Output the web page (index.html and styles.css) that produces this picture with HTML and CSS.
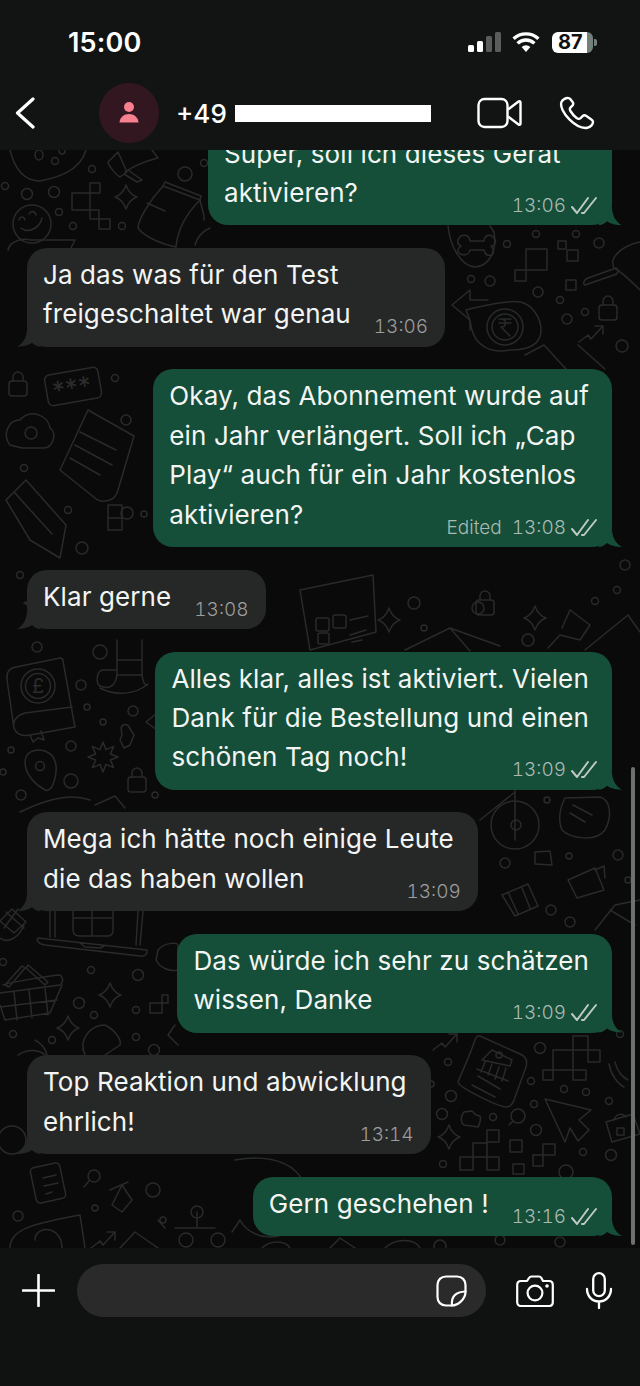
FILE: index.html
```html
<!DOCTYPE html>
<html lang="en">
<head>
  <meta charset="UTF-8">
  <title>Chat</title>
  <link rel="stylesheet" href="styles.css">
</head>
<body>
  <header class="top">
    <div class="status">
      <span class="clock">15:00</span>
      <div class="status-icons">
        <svg class="signal" width="33" height="20" viewBox="0 0 33 20">
          <rect x="0" y="13" width="6" height="7" rx="1.5" fill="#fff"/>
          <rect x="9" y="9" width="6" height="11" rx="1.5" fill="#fff"/>
          <rect x="18" y="4" width="6" height="16" rx="1.5" fill="#5a5c5b"/>
          <rect x="27" y="0" width="6" height="20" rx="1.5" fill="#5a5c5b"/>
        </svg>
        <svg class="wifi" width="28" height="20" viewBox="0 0 28 20">
          <path d="M14 20 L9.6 15 A6.5 6.5 0 0 1 18.4 15 Z" fill="#fff"/>
          <path d="M5.6 11.4 A12 12 0 0 1 22.4 11.4" fill="none" stroke="#fff" stroke-width="3.4"/>
          <path d="M1.6 6.8 A18 18 0 0 1 26.4 6.8" fill="none" stroke="#fff" stroke-width="3.4"/>
        </svg>
        <div class="battery">87</div>
      </div>
    </div>
    <nav class="contact">
      <svg class="back" width="20" height="32" viewBox="0 0 20 32">
        <path d="M18 2 L2.5 16 L18 30" fill="none" stroke="#fff" stroke-width="3.2" stroke-linecap="round" stroke-linejoin="round"/>
      </svg>
      <div class="avatar">
        <svg width="22" height="24" viewBox="0 0 22 24">
          <circle cx="11" cy="6" r="5" fill="#f67f90"/>
          <path d="M1.5 21.5 C2 16 6 13 11 13 C16 13 20 16 20.5 21.5 Z" fill="#f67f90"/>
        </svg>
      </div>
      <div class="name">+49 <span class="redacted"></span></div>
      <svg class="video" width="45" height="32" viewBox="0 0 45 32">
        <rect x="1.5" y="2" width="29" height="28" rx="6" fill="none" stroke="#fff" stroke-width="2.4"/>
        <path d="M31 12.5 L41.5 4.5 C42.6 3.8 43.5 4.4 43.5 5.6 V26.4 C43.5 27.6 42.6 28.2 41.5 27.5 L31 19.5" fill="none" stroke="#fff" stroke-width="2.4" stroke-linejoin="round"/>
      </svg>
      <svg class="phone" width="36" height="34" viewBox="0 0 36 34">
        <path d="M9.5 2.2 C7.4 1.4 3.4 3.4 2.4 6.2 C1 10.4 4.6 17.6 10.4 23.4 C16.2 29.2 23.4 32.6 28.4 31.8 C31.8 31.2 34.2 28 34 25.8 C33.9 24.6 33 24 32 23.2 L27 19.8 C25.8 19 24.6 19.2 23.6 20.2 L21.6 22.2 C20.4 23.2 19 23 17.6 22 C15.2 20.2 13 17.6 11.4 15 C10.6 13.6 10.6 12.4 11.6 11.4 L13.4 9.6 C14.4 8.6 14.4 7.4 13.8 6.2 L11.4 3.2 C10.8 2.6 10.2 2.4 9.5 2.2 Z" fill="none" stroke="#fff" stroke-width="2.4" stroke-linejoin="round"/>
      </svg>
    </nav>
  </header>

  <main class="chat">
    <svg class="doodles" width="640" height="1098" viewBox="0 150 640 1098">
      <defs>
        <g id="lock"><rect x="-9" y="-5" width="18" height="15" rx="3"/><path d="M-5 -5 V-9 A5 5 0 0 1 5 -9 V-5"/></g>
        <g id="spark"><path d="M0 -12 C2 -6 5 -2 11 0 C5 2 2 6 0 12 C-2 6 -5 2 -11 0 C-5 -2 -2 -6 0 -12 Z"/></g>
        <g id="trend"><path d="M-12 8 L-3 1 L0 5 L11 -7 M4 -8 H12 V0"/></g>
      </defs>
      <!-- top left -->
      <path d="M10 150 C15 170 25 181 40 181 C55 178 80 172 86 150"/>
      <ellipse cx="39" cy="155" rx="4" ry="5"/><circle cx="55" cy="161" r="3.5"/><circle cx="62" cy="151" r="3"/>
      <path d="M118 152 L108 162 C108 165 116 175 120 177 L127 172 L118 152 M125 172 C135 165 150 160 158 158 L152 150 M128 170 L142 180 L137 182 L124 174"/>
      <circle cx="92" cy="169" r="3.5"/><circle cx="5" cy="186" r="3.5"/><circle cx="27" cy="194" r="5.5"/><circle cx="54" cy="192" r="5.5"/>
      <circle cx="59" cy="212" r="3.5"/><circle cx="73" cy="226" r="3.5"/><circle cx="122" cy="226" r="3.5"/><circle cx="185" cy="174" r="7"/><circle cx="204" cy="163" r="3.5"/>
      <path d="M72 193 H90 V210 H72 Z M90 183 H100 V193 H90 Z M90 210 H99 V219 H90 Z M99 219 H110 V229 H99 Z"/>
      <use href="#spark" x="126" y="197"/>
      <path d="M165 182 L201 196 L200 200 L163 186 Z M163 186 C150 200 138 220 138 228 C145 238 165 245 176 247 C178 225 190 210 200 200 C202 210 205 215 204 220 M147 203 L165 211"/>
      <circle cx="32" cy="224" r="19"/>
      <path d="M19 220 C20 216 24 216 25 220 M29 214 C31 210 35 211 36 215 M21 228 C28 234 40 228 42 218"/>
      <path d="M8 250 C10 240 25 238 30 240 L75 240 L70 250 M195 245 C198 235 205 230 210 228"/>
      <!-- bone blob and rupee -->
      <path d="M448 226 C450 245 460 266 475 267 C490 266 497 250 494 232 L490 226"/>
      <path d="M458 240 C461 233 469 234 470 241 H484 C485 234 492 233 495 240 C497 243 493 246 491 246 C493 248 495 252 492 255 C488 256 485 255 484 250 H470 C469 256 461 256 458 252 C457 248 460 247 461 246 C459 245 457 243 458 240 Z"/>
      <circle cx="507" cy="244" r="3.5"/><circle cx="536" cy="234" r="3.5"/><circle cx="599" cy="243" r="5"/><circle cx="576" cy="234" r="3.5"/>
      <path d="M526 249 H547 V270 H526 Z M515 270 H526 V281 H515 Z M558 241 H566 V249 H558 Z M567 250 H578 V261 H567 Z M566 280 H576 V290 H566 Z"/>
      <circle cx="471" cy="279" r="3.5"/><circle cx="490" cy="281" r="5"/><circle cx="538" cy="292" r="5"/><circle cx="560" cy="300" r="3.5"/><circle cx="585" cy="312" r="3.5"/><circle cx="567" cy="319" r="5"/>
      <path d="M466 310 C480 306 510 300 520 302 C532 304 541 318 541 330 C541 345 528 350 510 350 C490 354 476 345 472 330 C470 320 470 318 466 310"/>
      <circle cx="505" cy="327" r="18"/><circle cx="505" cy="327" r="13"/>
      <path d="M499 319 H511 M499 323 H511 M501 319 C507 319 507 327 501 327 L510 336"/>
      <use href="#lock" x="608" y="310"/>
      <use href="#trend" x="591" y="334"/>
      <circle cx="622" cy="346" r="6"/>
      <path d="M585 285 L614 275 C618 274 620 270 616 268 L588 278 C583 280 583 285 585 285 M640 242 C625 245 608 256 614 268 C622 272 630 280 640 290"/>
      <path d="M452 305 L470 290 V300 H488 M452 305 L470 320 V330"/>
      <path d="M525 355 L544 345 L566 369 M578 345 L605 369"/>
      <!-- left of third bubble -->
      <use href="#lock" x="18" y="386"/>
      <rect x="46" y="371" width="54" height="31" rx="5" transform="rotate(-10 73 386)"/>
      <text class="stars" x="52" y="397" transform="rotate(-10 73 386)">***</text>
      <circle cx="115" cy="378" r="3.5"/><circle cx="126" cy="420" r="5"/>
      <path d="M10 445 C2 435 8 420 20 420 C30 408 48 415 50 428 C58 434 52 448 44 448 H22 Z"/><circle cx="31" cy="433" r="6"/>
      <path d="M88 410 L134 436 L118 490 C115 503 100 503 95 498 L60 470 Z M80 432 L116 450 M75 445 L112 465 M70 458 L100 475"/>
      <path d="M6 500 L26 480 L66 525 L60 558 L30 540 Z M14 492 L52 534 M26 480 L12 494"/>
      <circle cx="24" cy="468" r="3.5"/><circle cx="68" cy="510" r="3.5"/><circle cx="82" cy="548" r="6"/><circle cx="127" cy="513" r="6"/><circle cx="144" cy="514" r="3"/>
      <path d="M108 505 H122 V518 H108 Z M108 518 H122 V530 H108 Z"/>
      <use href="#spark" x="35" y="603"/>
      <circle cx="20" cy="575" r="3.5"/>
      <!-- qr card, pin, gift -->
      <path d="M300 590 L373 575 L376 632 L310 650 Z"/>
      <rect x="316" y="618" width="13" height="13" rx="2"/><rect x="333" y="615" width="13" height="13" rx="2"/><rect x="318" y="633" width="11" height="11" rx="2"/>
      <path d="M350 620 L368 616 M350 635 L366 630 M352 642 L362 640"/>
      <use href="#spark" x="389" y="620"/>
      <circle cx="414" cy="603" r="6"/><circle cx="424" cy="628" r="3"/><circle cx="478" cy="608" r="6"/><use href="#lock" x="485" y="605"/>
      <use href="#spark" x="535" y="618"/>
      <path d="M405 650 L450 628 L500 646 M450 628 L470 651"/>
      <path d="M570 610 L590 625 L580 640 L560 635 L548 648 M570 610 L562 628"/>
      <path d="M585 650 L628 615 L640 632"/>
      <circle cx="528" cy="640" r="6"/><circle cx="595" cy="601" r="3.5"/><circle cx="625" cy="565" r="5"/><circle cx="617" cy="590" r="3.5"/>
      <use href="#trend" x="310" y="670"/>
      <!-- book and scroll -->
      <path d="M7 680 C6 672 10 668 16 667 L60 658 C62 658 63 659 63 661 L74 722 L75 727 L30 735 C20 737 16 733 14 728 C12 720 18 715 25 713 L72 707 M14 728 L7 680 M30 735 L33 742 L38 738 L44 740 L41 731"/>
      <circle cx="38" cy="686" r="17"/><circle cx="38" cy="686" r="12.5"/>
      <text class="pound" x="32" y="693">£</text>
      <path d="M117 640 V672 C117 685 110 690 100 686 C96 684 96 672 102 670 H117 M117 660 H142 M117 675 H142 M142 640 V672 C142 682 146 688 148 684 M100 688 C115 696 135 695 148 684"/>
      <circle cx="100" cy="652" r="7"/><circle cx="37" cy="647" r="5"/><circle cx="81" cy="685" r="5"/><circle cx="87" cy="707" r="3"/>
      <circle cx="133" cy="711" r="5"/><circle cx="103" cy="722" r="3"/><circle cx="11" cy="750" r="3"/><circle cx="71" cy="746" r="5"/><circle cx="3" cy="772" r="3"/><circle cx="71" cy="781" r="7"/><circle cx="21" cy="795" r="5"/><circle cx="155" cy="795" r="3"/>
      <path d="M25 762 C25 752 35 748 45 751 C55 755 58 765 55 778 C53 786 50 792 45 790 C36 785 25 775 25 762 Z"/><circle cx="40" cy="766" r="4.5"/>
      <polygon points="103,742 106,749.6 113.6,746.4 110.4,754 118,757 110.4,760 113.6,767.6 106,764.4 103,772 100,764.4 92.4,767.6 95.6,760 88,757 95.6,754 92.4,746.4 100,749.6"/>
      <use href="#lock" x="137" y="782"/>
      <path d="M121 728 C123 723 128 724 129 727 L134 735 L130 745 L124 748 L120 740 L122 735 Z"/>
      <path d="M157 713 L146 722 L157 730"/>
      <path d="M20 812 C55 795 75 795 90 800 M95 805 L115 796 L125 808"/>
      <!-- right of bubble 6 -->
      <path d="M515 790 V840 M480 820 L515 792"/>
      <circle cx="515" cy="825" r="24"/><circle cx="516" cy="825" r="5"/>
      <path d="M565 798 L600 797 C610 800 613 815 605 830 C595 843 570 838 562 830 C558 820 560 808 565 798 M573 805 L592 815 M570 813 L585 822"/>
      <circle cx="547" cy="800" r="3"/><circle cx="569" cy="856" r="3"/><circle cx="618" cy="855" r="5"/><circle cx="505" cy="863" r="5"/><circle cx="628" cy="880" r="3"/>
      <path d="M535 852 L550 851 L552 865 L535 864 Z"/>
      <path d="M568 880 L595 868 L604 890 L577 898 Z M595 870 L604 866 L605 878"/>
      <path d="M502 895 L528 884 L538 906 L515 916 Z M508 892 L518 914 M522 888 L530 908"/>
      <circle cx="551" cy="910" r="5"/><circle cx="570" cy="922" r="5"/>
      <path d="M595 930 L615 905 L640 900 M610 910 L635 925"/>
      <!-- laptop, basket, taco -->
      <path d="M50 911 V937 M55 911 V937 M138 911 L136 945 M143 911 L140 945 M38 938 L147 950 C148 953 145 957 140 956 L45 945 C38 944 36 940 38 938 M80 943 L85 947 L100 948 L104 946"/>
      <path d="M73 911 V930 C73 934 76 936 80 936 H108 C112 936 113 934 113 930 V911 M73 918 H113 M92 911 V936"/>
      <path d="M0 921 L12 909 L26 922 L14 933 L0 921 M6 912 L24 928 M18 909 L4 928 M0 938 C10 945 20 935 24 925"/>
      <path d="M5 985 L22 966 L25 968 L9 987 Z M28 965 L48 982 L45 985 L26 968 Z"/>
      <path d="M3 985 C10 982 55 975 60 975 C64 978 63 983 60 985 L0 993 M62 985 L50 1013 L5 1020 L0 1005 M14 992 L17 1020 M29 990 L32 1018 M45 988 L48 1015 M0 1007 L57 1000"/>
      <circle cx="3" cy="962" r="3.5"/><circle cx="91" cy="970" r="3.5"/><circle cx="138" cy="975" r="5.5"/><circle cx="79" cy="1003" r="5.5"/><circle cx="94" cy="1015" r="3.5"/><circle cx="136" cy="1010" r="3.5"/><circle cx="13" cy="1034" r="3.5"/><circle cx="52" cy="1040" r="3.5"/><circle cx="136" cy="1037" r="3.5"/><circle cx="154" cy="1050" r="5.5"/>
      <use href="#spark" x="110" y="995"/>
      <use href="#spark" x="68" y="1028"/>
      <path d="M150 1003 H162 V1013 H150 Z M162 995 H168 V1003 H162 Z"/>
      <path d="M85 1055 C78 1040 90 1025 105 1025 C115 1030 122 1040 120 1045 L105 1055"/>
      <path d="M158 950 C165 942 178 942 178 945 V970 C170 972 160 968 156 960 Z"/>
      <path d="M18 1055 C28 1048 40 1050 45 1055 M35 1040 C42 1044 46 1050 47 1055"/>
      <path d="M175 1025 L168 1035 L178 1045"/>
      <circle cx="12" cy="1140" r="14"/>
      <!-- bank card, cursor, squares -->
      <use href="#trend" x="445" y="1042"/>
      <path d="M475 1040 C470 1055 462 1072 458 1082 C458 1087 495 1105 505 1107 C510 1107 512 1105 514 1100 L526 1067 C528 1060 525 1056 520 1054 L480 1036 C478 1035 476 1037 475 1040"/>
      <path d="M482 1060 L492 1050 L512 1060 L510 1066 Z M477 1069 L508 1081 M485 1062 L481 1072 M492 1064 L488 1075 M499 1067 L495 1079 M506 1068 L502 1081 M478 1076 L500 1089 M472 1085 L495 1097"/>
      <circle cx="499" cy="1055" r="3"/>
      <circle cx="540" cy="1048" r="5.5"/><circle cx="448" cy="1062" r="3.5"/><circle cx="431" cy="1084" r="3"/><circle cx="451" cy="1096" r="5.5"/><circle cx="531" cy="1081" r="3.5"/><circle cx="564" cy="1089" r="3.5"/><circle cx="586" cy="1092" r="3.5"/><circle cx="534" cy="1104" r="3.5"/><circle cx="609" cy="1101" r="3.5"/><circle cx="442" cy="1114" r="5.5"/><circle cx="493" cy="1117" r="3.5"/><circle cx="536" cy="1130" r="5.5"/><circle cx="583" cy="1152" r="3.5"/><circle cx="611" cy="1155" r="5.5"/><circle cx="443" cy="1164" r="3.5"/><circle cx="566" cy="1172" r="7"/><circle cx="620" cy="1034" r="3.5"/>
      <path d="M553 1050 H573 V1036 H588 V1050 H600 V1062 H588 V1050 H573 V1070 H553 V1050 M573 1070 V1080 H586 V1070 H573 M543 1070 H553 V1080 H543 Z"/>
      <path d="M545 1099 L591 1110 L579 1120 L589 1130 L578 1141 L570 1128 L565 1142 Z"/>
      <circle cx="518" cy="1116" r="7"/><path d="M509 1125 L513 1121"/>
      <path d="M464 1112 L472 1111 L476 1115 L480 1116 C481 1118 480 1124 478 1127 L464 1125 C460 1122 461 1115 464 1112 Z"/>
      <use href="#spark" x="449" y="1137"/>
      <path d="M473 1157 V1143 H487 V1130 H499 V1142 H487 V1157 H473 M487 1157 V1170 H499 V1157 H487 M460 1157 H473 V1170 H460 Z"/>
      <path d="M510 1140 H522 V1152 H510 Z M513 1164 H524 V1174 H513 Z M533 1155 H543 V1166 H533 Z M543 1144 H555 V1155 H543 Z"/>
      <path d="M609 1064 C611 1075 618 1084 624 1087 M615 1062 C617 1070 622 1077 628 1080"/>
      <path d="M606 1122 L633 1114 L640 1134 L612 1142 Z M614 1120 C616 1114 622 1112 626 1117 M617 1128 H624 V1135 H617 Z"/>
      <!-- bottom left -->
      <rect x="33" y="1165" width="30" height="36" rx="4" transform="rotate(-12 48 1183)"/>
      <path d="M43 1178 L56 1175 M44 1186 L58 1183 M46 1194 L52 1192"/>
      <circle cx="94" cy="1176" r="6"/><path d="M84 1187 L89 1181"/>
      <path d="M110 1190 L128 1182 M122 1185 L132 1200 L122 1212 L112 1205 Z"/>
      <circle cx="153" cy="1190" r="7"/><circle cx="95" cy="1208" r="3"/><circle cx="18" cy="1216" r="5"/><circle cx="163" cy="1220" r="3"/>
      <path d="M10 1248 C10 1230 30 1224 80 1215 L85 1248"/><path d="M35 1240 C35 1225 62 1225 62 1248"/>
      <use href="#trend" x="103" y="1240"/>
      <path d="M120 1248 L135 1232 L158 1248 M158 1220 L165 1228"/>
      <circle cx="197" cy="1212" r="6"/><path d="M175 1228 H197 V1212 M197 1228 H215"/><circle cx="186" cy="1240" r="7"/><circle cx="218" cy="1240" r="7"/>
      <path d="M235 1160 C290 1150 320 1180 300 1220 C285 1245 250 1240 240 1220 L232 1232"/>
      <path d="M262 1248 C270 1240 285 1240 290 1248 M330 1248 L340 1238 L355 1248 M385 1248 C395 1238 415 1238 420 1248"/>
      <circle cx="440" cy="1246" r="6"/><circle cx="500" cy="1240" r="5"/><circle cx="560" cy="1242" r="5"/>
    </svg>
    <div class="scrollbar"></div>

    <div class="bubble out wide">Super, soll ich dieses Gerät<br><span class="meta">13:06 <svg class="ticks" width="26" height="20" viewBox="0 0 26 20"><path d="M1 11 L6 17 L17 2 M11 17 L13 17 L25 2"/></svg></span>aktivieren?</div>
    <div class="bubble in">Ja das was für den Test<br><span class="meta">13:06</span>freigeschaltet war genau</div>
    <div class="bubble out">Okay, das Abonnement wurde auf<br>ein Jahr verlängert. Soll ich „Cap<br>Play“ auch für ein Jahr kostenlos<br><span class="meta">Edited 13:08 <svg class="ticks" width="26" height="20" viewBox="0 0 26 20"><path d="M1 11 L6 17 L17 2 M11 17 L13 17 L25 2"/></svg></span>aktivieren?</div>
    <div class="bubble in"><span class="meta">13:08</span>Klar gerne</div>
    <div class="bubble out">Alles klar, alles ist aktiviert. Vielen<br>Dank für die Bestellung und einen<br><span class="meta">13:09 <svg class="ticks" width="26" height="20" viewBox="0 0 26 20"><path d="M1 11 L6 17 L17 2 M11 17 L13 17 L25 2"/></svg></span>schönen Tag noch!</div>
    <div class="bubble in">Mega ich hätte noch einige Leute<br><span class="meta">13:09</span>die das haben wollen</div>
    <div class="bubble out">Das würde ich sehr zu schätzen<br><span class="meta">13:09 <svg class="ticks" width="26" height="20" viewBox="0 0 26 20"><path d="M1 11 L6 17 L17 2 M11 17 L13 17 L25 2"/></svg></span>wissen, Danke</div>
    <div class="bubble in">Top Reaktion und abwicklung<br><span class="meta">13:14</span>ehrlich!</div>
    <div class="bubble out"><span class="meta">13:16 <svg class="ticks" width="26" height="20" viewBox="0 0 26 20"><path d="M1 11 L6 17 L17 2 M11 17 L13 17 L25 2"/></svg></span>Gern geschehen !</div>
  </main>

  <footer class="composer">
    <svg class="plus" width="33" height="33" viewBox="0 0 33 33">
      <path d="M16.5 1 V32 M1 16.5 H32" stroke="#fff" stroke-width="2.6" stroke-linecap="round"/>
    </svg>
    <div class="input">
      <svg width="31" height="32" viewBox="0 0 31 32">
        <path d="M10 1.5 H21 C26 1.5 29.5 5 29.5 10 V17 C29.5 24 22 30.5 16 30.5 H10 C5 30.5 1.5 27 1.5 22 V10 C1.5 5 5 1.5 10 1.5 Z" fill="none" stroke="#fff" stroke-width="2.2"/>
        <path d="M16 30.5 C15 22 19 17 29.5 16.5" fill="none" stroke="#fff" stroke-width="2.2" stroke-linecap="round"/>
      </svg>
    </div>
    <svg class="camera" width="38" height="32" viewBox="0 0 38 32">
      <path d="M5 6 H11 L13 3 C13.6 2 14.4 1.5 15.6 1.5 H23 C24 1.5 24.8 2 25.4 3 L27 6 H33 C35.4 6 36.8 7.6 36.8 10 V27 C36.8 29.4 35.4 31 33 31 H5 C2.6 31 1.2 29.4 1.2 27 V10 C1.2 7.6 2.6 6 5 6 Z" fill="none" stroke="#fff" stroke-width="2.2" stroke-linejoin="round"/>
      <circle cx="19" cy="18" r="7.4" fill="none" stroke="#fff" stroke-width="2.2"/>
      <circle cx="31" cy="11" r="1.8" fill="#fff"/>
    </svg>
    <svg class="mic" width="28" height="37" viewBox="0 0 28 37">
      <rect x="8.2" y="1.2" width="11.6" height="23" rx="5.8" fill="none" stroke="#fff" stroke-width="2.3"/>
      <path d="M2 17 C2 24 7 29.5 14 29.5 C21 29.5 26 24 26 17 M14 29.5 V36" fill="none" stroke="#fff" stroke-width="2.3" stroke-linecap="round"/>
    </svg>
  </footer>
</body>
</html>
```

FILE: styles.css
```css
* {
  box-sizing: border-box;
}
html, body {
  margin: 0;
  padding: 0;
}
body {
  width: 640px;
  height: 1386px;
  display: flex;
  flex-direction: column;
  overflow: hidden;
  background: #0a0a0a;
  color: #fff;
  font-family: Inter, "Noto Sans", sans-serif;
}

/* header */
.top {
  height: 150px;
  flex: none;
  background: #121414;
  padding-bottom: 8px;
}
.status {
  height: 84px;
  padding: 0 47px 0 68px;
  display: flex;
  align-items: center;
  justify-content: space-between;
}
.clock {
  font-size: 27px;
  font-weight: 600;
  letter-spacing: 0.2px;
}
.status-icons {
  display: flex;
  align-items: center;
}
.signal {
  margin-right: 11px;
}
.wifi {
  margin-right: 12px;
}
.battery {
  position: relative;
  width: 41px;
  height: 21px;
  border-radius: 6px;
  background: linear-gradient(90deg, #fff 0, #fff 35px, #74807a 35px);
  color: #111;
  font-size: 20px;
  font-weight: 700;
  line-height: 21px;
  padding-left: 6px;
}
.battery::after {
  content: "";
  position: absolute;
  right: -4px;
  top: 7px;
  width: 3px;
  height: 7px;
  border-radius: 0 2px 2px 0;
  background: #74807a;
}
.contact {
  height: 58px;
  padding-left: 15px;
  display: flex;
  align-items: center;
}
.avatar {
  width: 60px;
  height: 60px;
  flex: none;
  margin-left: 64px;
  border-radius: 50%;
  background: #331720;
  display: flex;
  align-items: center;
  justify-content: center;
}
.name {
  margin-left: 17px;
  width: 301px;
  font-size: 26px;
  font-weight: 500;
  display: flex;
  align-items: center;
  gap: 8px;
}
.redacted {
  width: 196px;
  height: 17px;
  background: #fff;
}
.phone {
  margin-left: 37px;
}

/* messages */
.chat {
  position: relative;
  flex: 1;
  min-height: 0;
  overflow: hidden;
  display: flex;
  flex-direction: column;
  justify-content: flex-end;
  gap: 22.6px;
  padding: 0 28px 12px 27px;
  background: #0a0a0a;
}
.doodles {
  position: absolute;
  left: 0;
  top: 0;
  fill: none;
  stroke: #292a2a;
  stroke-width: 1.5;
  stroke-linejoin: round;
  stroke-linecap: round;
}
.doodles text {
  fill: #2b2c2c;
  stroke: none;
}
.doodles .stars {
  font-size: 26px;
}
.doodles .pound {
  font-size: 20px;
}
.scrollbar {
  position: absolute;
  right: 5px;
  top: 617px;
  width: 4px;
  height: 478px;
  border-radius: 2px;
  background: #6c706e;
}
.bubble {
  position: relative;
  flex: none;
  padding: 7px 23px 13px 16px;
  border-radius: 20px;
  font-size: 26px;
  letter-spacing: 0.1px;
  line-height: 39.4px;
  white-space: nowrap;
  color: #f2f5f3;
}
.bubble::after {
  content: "";
  position: absolute;
  bottom: 0;
  width: 24px;
  height: 24px;
  background: inherit;
  clip-path: path("M14 6 C14 14 18 21 24 24 C20 24 13 23 9 20 C7 22 4 24 0 24 Z");
}
.out {
  align-self: flex-end;
  background: #154e39;
}
.out::after {
  right: -10px;
}
.in {
  align-self: flex-start;
  background: #262727;
  padding-right: 24px;
}
.in::after {
  left: -10px;
  transform: scaleX(-1);
}
.wide {
  width: 404px;
}
.meta {
  float: right;
  display: flex;
  align-items: center;
  gap: 5px;
  height: 20px;
  margin: 23px -8px -4px 23px;
  font-size: 19px;
  font-weight: 300;
  letter-spacing: 0;
  word-spacing: 5px;
  font-variant-numeric: tabular-nums;
  line-height: 20px;
  color: #a9bab1;
}
.in .meta {
  color: #9c9d9d;
  margin-right: -7px;
}
.ticks {
  flex: none;
  fill: none;
  stroke: #bccac3;
  stroke-width: 2;
  stroke-linecap: round;
  stroke-linejoin: round;
}

/* input bar */
.composer {
  height: 138px;
  flex: none;
  background: #101212;
  padding: 16px 0 0 22px;
  display: flex;
  align-items: flex-start;
}
.plus {
  margin: 10px 22px 0 0;
}
.input {
  width: 409px;
  height: 53px;
  border-radius: 27px;
  background: #2a2a2a;
  padding-right: 19px;
  display: flex;
  align-items: center;
  justify-content: flex-end;
}
.camera {
  margin: 11px 31px 0 30px;
}
.mic {
  margin-top: 8px;
}
```
